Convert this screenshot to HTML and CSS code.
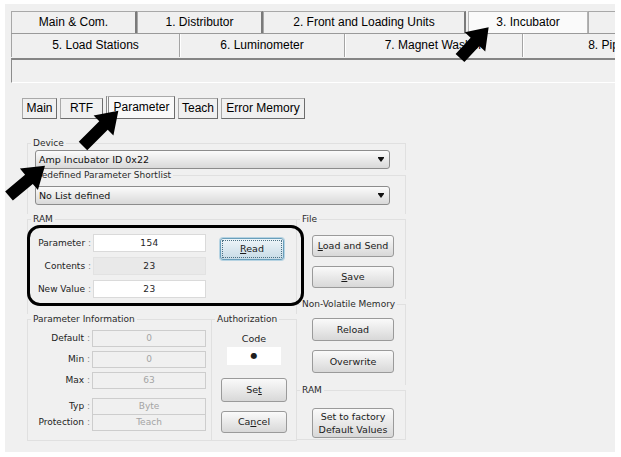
FILE: index.html
```
<!DOCTYPE html>
<html lang="en">
<head>
  <meta charset="UTF-8">
  <title>Incubator Parameter</title>
  <link rel="stylesheet" href="styles.css">
</head>
<body>
  <div class="window">
    <div class="tabstrip">
      <div class="tab-row row-1">
        <div class="tab w126">Main &amp; Com.</div>
        <div class="tab w126">1. Distributor</div>
        <div class="tab w203">2. Front and Loading Units</div>
        <div class="tab w122 selected">3. Incubator</div>
        <div class="tab w60"></div>
      </div>
      <div class="tab-row row-2">
        <div class="tab w169">5. Load Stations</div>
        <div class="tab w165">6. Luminometer</div>
        <div class="tab w178">7. Magnet Washer</div>
        <div class="tab w186">8. Pipettor</div>
      </div>
      <div class="tab-pane"></div>
    </div>

    <div class="subtabs">
      <div class="subtab s-main">Main</div>
      <div class="subtab s-rtf">RTF</div>
      <div class="subtab s-param active">Parameter</div>
      <div class="subtab s-teach">Teach</div>
      <div class="subtab s-error">Error Memory</div>
    </div>

    <div class="panel">
      <fieldset class="group device">
        <legend>Device</legend>
        <div class="combo combo-first"><span>Amp Incubator ID 0x22</span><i class="caret"></i></div>
      </fieldset>
      <fieldset class="group shortlist">
        <legend>Predefined Parameter Shortlist</legend>
        <div class="combo"><span>No List defined</span><i class="caret"></i></div>
      </fieldset>

      <div class="columns">
        <div class="col-left">
          <fieldset class="group ram">
            <legend>RAM</legend>
            <div class="ram-grid">
              <label class="lbl">Parameter <b>:</b></label>
              <div class="field white">154</div>
              <button class="btn btn-read"><u>R</u>ead</button>
              <label class="lbl">Contents <b>:</b></label>
              <div class="field shaded">23</div>
              <label class="lbl">New Value <b>:</b></label>
              <div class="field white">23</div>
            </div>
          </fieldset>

          <div class="lower">
            <fieldset class="group info">
              <legend>Parameter Information</legend>
              <div class="info-grid">
                <label class="lbl">Default <b>:</b></label>
                <div class="field muted">0</div>
                <label class="lbl">Min <b>:</b></label>
                <div class="field muted">0</div>
                <label class="lbl">Max <b>:</b></label>
                <div class="field muted">63</div>
                <label class="lbl spaced">Typ <b>:</b></label>
                <div class="field muted spaced">Byte</div>
                <label class="lbl">Protection <b>:</b></label>
                <div class="field muted">Teach</div>
              </div>
            </fieldset>
            <fieldset class="group auth">
              <legend>Authorization</legend>
              <div class="auth-body">
                <div class="code-label">Code</div>
                <div class="code-input">&#9679;</div>
                <button class="btn btn-set">Se<u>t</u></button>
                <button class="btn btn-cancel">Ca<u>n</u>cel</button>
              </div>
            </fieldset>
          </div>
        </div>

        <div class="col-right">
          <fieldset class="group file">
            <legend>File</legend>
            <button class="btn side-btn btn-load"><u>L</u>oad and Send</button>
            <button class="btn side-btn btn-save"><u>S</u>ave</button>
          </fieldset>
          <fieldset class="group nvm">
            <legend>Non-Volatile Memory</legend>
            <button class="btn side-btn btn-reload">Reload</button>
            <button class="btn side-btn btn-overwrite">Overwrite</button>
          </fieldset>
          <fieldset class="group ram2">
            <legend>RAM</legend>
            <button class="btn side-btn btn-factory">Set to factory<br>Default Values</button>
          </fieldset>
        </div>
      </div>
    </div>
  </div>

  <!-- annotations drawn over the screenshot -->
  <div class="mark-box"></div>
  <svg class="arrow arrow-1" width="1" height="1"><polygon points="0,-6 22,-6 22,-14 42,0 22,14 22,6 0,6" transform="rotate(-47)"/></svg>
  <svg class="arrow arrow-2" width="1" height="1"><polygon points="0,-6 29,-6 29,-14 50,0 29,14 29,6 0,6" transform="rotate(-45)"/></svg>
  <svg class="arrow arrow-3" width="1" height="1"><polygon points="0,-6 26,-6 26,-14 47,0 26,14 26,6 0,6" transform="rotate(-40)"/></svg>
</body>
</html>
```

FILE: styles.css
```
body {
  margin: 0;
  background: #ffffff;
  font-family: "DejaVu Sans", sans-serif;
  font-size: 9px;
  color: #1e1e1e;
}

.window {
  width: 610px;
  height: 448px;
  margin: 4px 0 0 5px;
  background: #f0f0f0;
  overflow: hidden;
}

/* top tab control */
.tabstrip {
  padding: 7px 0 0 6px;
  font-family: "Liberation Sans", Arial, sans-serif;
  font-size: 12px;
  color: #000;
}

.tab-row {
  display: flex;
  white-space: nowrap;
}

.row-1 {
  height: 22px;
}

.row-2 {
  height: 24px;
  border-top: 1px solid #9a9a9a;
}

.tab {
  flex: none;
  box-sizing: border-box;
  text-align: center;
  overflow: hidden;
}

.row-1 .tab {
  height: 22px;
  line-height: 21px;
  border: 1px solid #a8a8a8;
  border-right: 2px solid #7a7a7a;
  border-bottom: none;
  background: #f0f0f0;
}

.row-1 .tab.selected {
  background: #fafafa;
  border-color: #b4b4b4;
  border-right: 1px solid #b4b4b4;
  margin-left: 2px;
}

.row-2 .tab {
  height: 23px;
  line-height: 22px;
  border-right: 1px solid #a4a4a4;
  box-shadow: 1px 0 0 #ffffff;
}

.row-2 .tab:first-child {
  border-left: 1px solid #a4a4a4;
}

.w60 { width: 60px; }
.w122 { width: 120px; }
.w126 { width: 126px; }
.w165 { width: 165px; }
.w169 { width: 169px; }
.w178 { width: 178px; }
.w186 { width: 186px; }
.w203 { width: 203px; }

.tab-pane {
  height: 25px;
  box-sizing: border-box;
  border-top: 2px solid #858585;
  border-left: 1px solid #8c8c8c;
  border-bottom: 1px solid #ffffff;
}

/* second tab row */
.subtabs {
  display: flex;
  align-items: flex-end;
  gap: 3px;
  height: 23px;
  margin: 13px 0 0 17px;
  font-family: "Liberation Sans", Arial, sans-serif;
  font-size: 12px;
  color: #000;
}

.subtab {
  box-sizing: border-box;
  height: 21px;
  line-height: 19px;
  text-align: center;
  border: 1px solid #a9a9a9;
  border-right-color: #6c6c6c;
  border-bottom-color: #6c6c6c;
  background: #f0f0f0;
}

.subtab.active {
  height: 23px;
  line-height: 21px;
  background: #f9f9f9;
  border-left: 3px double #8a8a8a;
}

.s-main { width: 35px; }
.s-rtf { width: 43px; }
.s-param { width: 69px; }
.s-teach { width: 40px; }
.s-error { width: 84px; }

/* parameter panel */
.panel {
  width: 379px;
  margin: 19px 0 0 22px;
}

.group {
  margin: 0;
  padding: 0;
  min-width: 0;
  border: 1px solid #e0e0e0;
  border-bottom: none;
}

.group legend {
  margin-left: 3px;
  padding: 0 2px;
  height: 11px;
  line-height: 11px;
  color: #2a2a2a;
}

.device {
  padding-bottom: 1px;
}

.shortlist {
  padding-bottom: 9px;
}

.combo {
  display: flex;
  align-items: center;
  justify-content: space-between;
  box-sizing: border-box;
  width: 355px;
  height: 19px;
  margin: 5px 0 0 7px;
  padding: 0 5px 0 3px;
  border: 1px solid #8c8c8c;
  border-radius: 3px;
  background: linear-gradient(#fbfbfb, #d9d9d9);
  font-size: 9.5px;
  color: #111;
}

.combo-first {
  margin-top: 1px;
}

.caret {
  width: 0;
  height: 0;
  border-top: 4px solid #111;
  border-left: 3px solid transparent;
  border-right: 3px solid transparent;
  box-shadow: 0 -1px 0 #111;
}

.columns {
  display: grid;
  grid-template-columns: 270px 109px;
}

/* left column */
.ram {
  padding: 9px 0 16px;
}

.ram-grid {
  display: grid;
  grid-template-columns: 63px 113px 64px;
  grid-auto-rows: 18px;
  column-gap: 2px;
  row-gap: 5px;
}

.lbl {
  text-align: right;
  line-height: 18px;
  white-space: nowrap;
  color: #222;
}

.lbl b {
  font-weight: normal;
  color: #8a8a8a;
}

.field {
  box-sizing: border-box;
  height: 18px;
  line-height: 16px;
  text-align: center;
  border: 1px solid #dadada;
  letter-spacing: 0.5px;
}

.field.white {
  background: #ffffff;
}

.field.shaded {
  background: #e9e9e9;
  border-color: #e2e2e2;
}

.field.muted {
  height: 17px;
  line-height: 15px;
  background: #f0f0f0;
  border-color: #cdcdcd;
  color: #a4a4a4;
  letter-spacing: 0;
}

.btn {
  box-sizing: border-box;
  padding: 0;
  border: 1px solid #9a9a9a;
  border-radius: 3px;
  background: linear-gradient(#fafafa, #d8d8d8);
  font-family: "DejaVu Sans", sans-serif;
  font-size: 9.5px;
  color: #1a1a1a;
  line-height: 12px;
}

.btn-read {
  grid-column: 3;
  grid-row: 1 / span 2;
  width: 64px;
  height: 22px;
  margin: 4px 0 0 12px;
  border-color: #6a9fbb;
  box-shadow: 0 0 0 1px #b6d3e2;
  outline: 1px dotted #4a6f82;
  outline-offset: -3px;
  background: linear-gradient(#eef5f9, #c7dbe6);
}

.lower {
  display: grid;
  grid-template-columns: 185px 85px;
}

.info {
  padding: 5px 0 3px;
  border-bottom: 1px solid #e0e0e0;
}

.info-grid {
  display: grid;
  grid-template-columns: 62px 114px;
  grid-auto-rows: 17px;
  column-gap: 2px;
  row-gap: 4px;
}

.info-grid .lbl {
  line-height: 17px;
}

.info-grid .spaced {
  margin-top: 5px;
}

.auth {
  border-left: none;
  border-bottom: 1px solid #e0e0e0;
}

.auth-body {
  display: flex;
  flex-direction: column;
  align-items: center;
}

.code-label {
  margin-top: 8px;
  line-height: 11px;
  font-size: 9.5px;
}

.code-input {
  width: 54px;
  height: 18px;
  margin-top: 3px;
  background: #ffffff;
  text-align: center;
  line-height: 18px;
  font-size: 8px;
}

.btn-set {
  width: 66px;
  height: 24px;
  margin-top: 13px;
}

.btn-cancel {
  width: 66px;
  height: 22px;
  margin: 9px 0 7px;
}

/* right column */
.col-right .group {
  border-left: none;
}

.side-btn {
  display: block;
  width: 82px;
  margin-left: 15px;
}

.file {
  padding-bottom: 11px;
}

.btn-load {
  height: 22px;
  margin-top: 10px;
}

.btn-save {
  height: 22px;
  margin-top: 9px;
}

.nvm {
  padding-bottom: 12px;
}

.btn-reload {
  height: 23px;
  margin-top: 8px;
}

.btn-overwrite {
  height: 23px;
  margin-top: 9px;
}

.ram2 {
  padding-bottom: 1px;
  border-bottom: 1px solid #e0e0e0;
}

.btn-factory {
  height: 30px;
  margin-top: 12px;
  line-height: 13px;
}

/* annotations */
.mark-box {
  position: absolute;
  left: 27px;
  top: 225px;
  width: 277px;
  height: 81px;
  box-sizing: border-box;
  border: 3px solid #000;
  border-radius: 13px;
}

.arrow {
  position: absolute;
  overflow: visible;
  fill: #000;
}

.arrow-1 { left: 460px; top: 58px; }
.arrow-2 { left: 83px; top: 146px; }
.arrow-3 { left: 9px; top: 196px; }
```
